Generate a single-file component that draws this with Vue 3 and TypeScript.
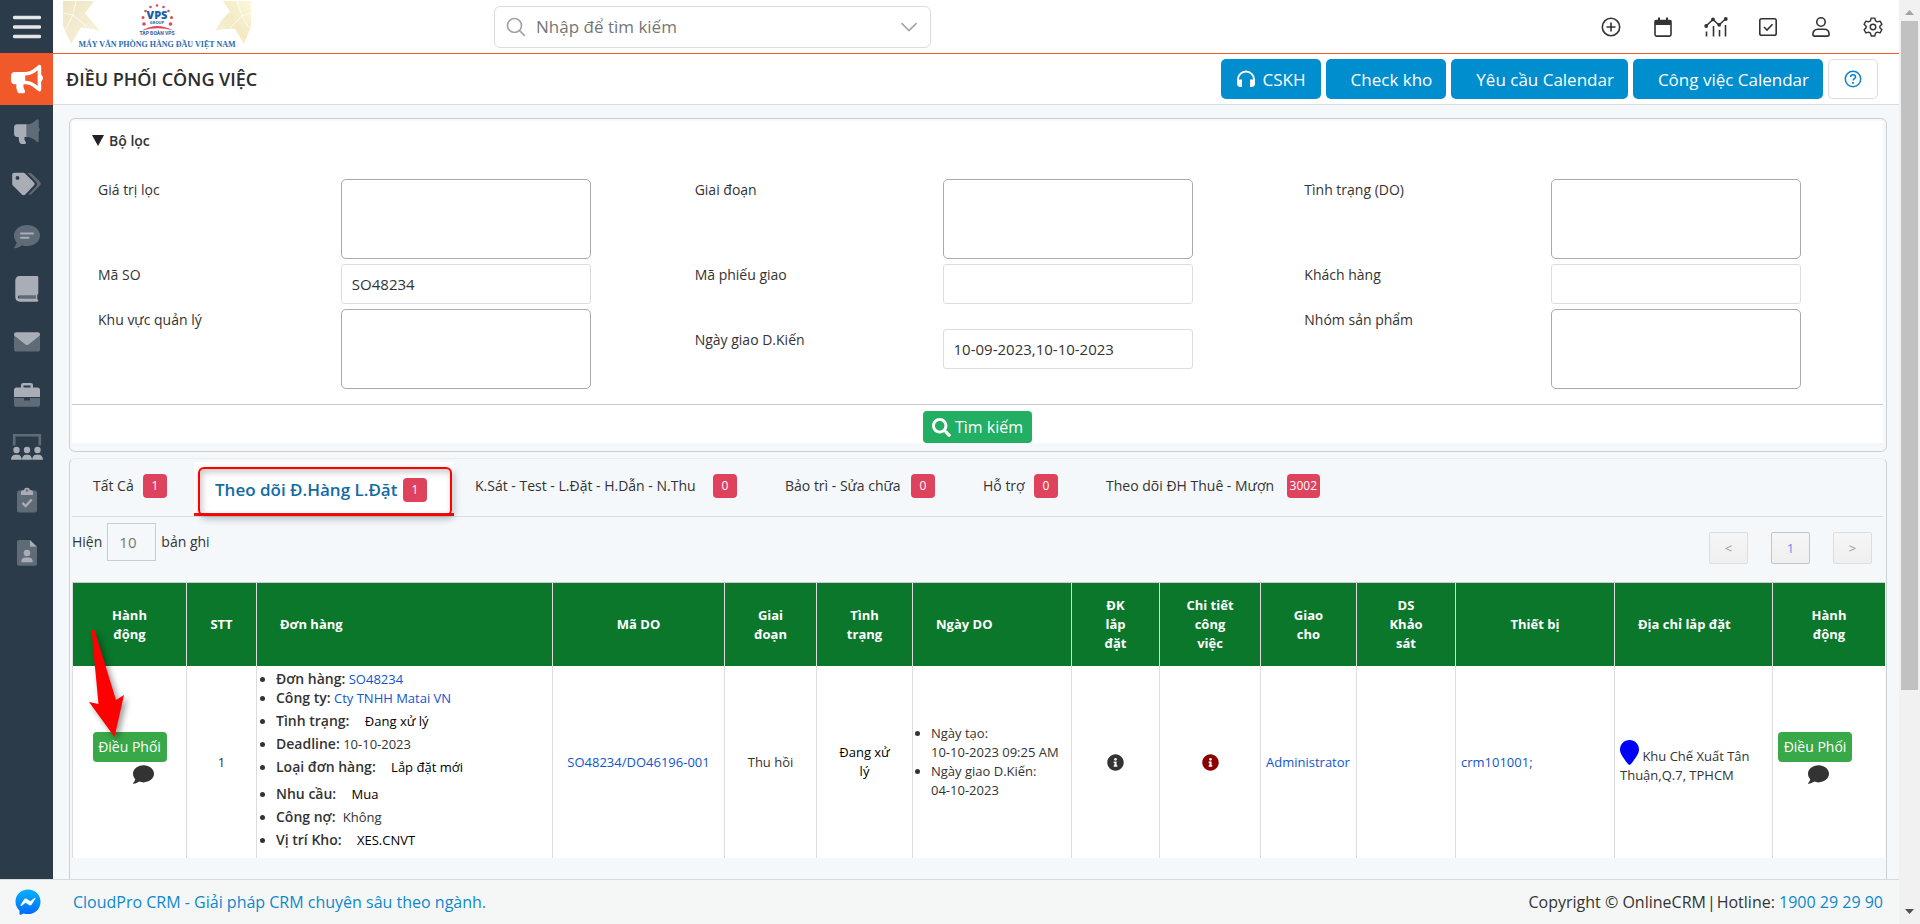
<script setup lang="ts">
import { ref } from 'vue'

interface Field {
  id: string
  label: string
  kind: 'box' | 'text'
  value?: string
  lowered?: boolean
}

interface Tab {
  label: string
  count: string
}

interface Detail {
  label: string
  value: string
  kind: 'link' | 'plain' | 'state' | 'near'
}

const fields = ref<Field[]>([
  { id: 'filter-value', label: 'Giá trị lọc', kind: 'box' },
  { id: 'stage', label: 'Giai đoạn', kind: 'box' },
  { id: 'do-status', label: 'Tình trạng (DO)', kind: 'box' },
  { id: 'so-code', label: 'Mã SO', kind: 'text', value: 'SO48234' },
  { id: 'delivery-code', label: 'Mã phiếu giao', kind: 'text', value: '' },
  { id: 'customer', label: 'Khách hàng', kind: 'text', value: '' },
  { id: 'region', label: 'Khu vực quản lý', kind: 'box' },
  { id: 'due-range', label: 'Ngày giao D.Kiến', kind: 'text', value: '10-09-2023,10-10-2023', lowered: true },
  { id: 'product-group', label: 'Nhóm sản phẩm', kind: 'box' },
])

const tabs: Tab[] = [
  { label: 'Tất Cả', count: '1' },
  { label: 'Theo dõi Đ.Hàng L.Đặt', count: '1' },
  { label: 'K.Sát - Test - L.Đặt - H.Dẫn - N.Thu', count: '0' },
  { label: 'Bảo trì - Sửa chữa', count: '0' },
  { label: 'Hỗ trợ', count: '0' },
  { label: 'Theo dõi ĐH Thuê - Mượn', count: '3002' },
]
const activeTab = ref(1)
const pageLength = ref('10')
const filterOpen = ref(true)

const columns: { lines: string[]; left?: boolean }[] = [
  { lines: ['Hành', 'động'] },
  { lines: ['STT'] },
  { lines: ['Đơn hàng'], left: true },
  { lines: ['Mã DO'] },
  { lines: ['Giai', 'đoạn'] },
  { lines: ['Tình', 'trạng'] },
  { lines: ['Ngày DO'], left: true },
  { lines: ['ĐK', 'lắp', 'đặt'] },
  { lines: ['Chi tiết', 'công', 'việc'] },
  { lines: ['Giao', 'cho'] },
  { lines: ['DS', 'Khảo', 'sát'] },
  { lines: ['Thiết bị'] },
  { lines: ['Địa chỉ lắp đặt'], left: true },
  { lines: ['Hành', 'động'] },
]

const details: Detail[] = [
  { label: 'Đơn hàng:', value: 'SO48234', kind: 'link' },
  { label: 'Công ty:', value: 'Cty TNHH Matai VN', kind: 'link' },
  { label: 'Tình trạng:', value: 'Đang xử lý', kind: 'state' },
  { label: 'Deadline:', value: '10-10-2023', kind: 'plain' },
  { label: 'Loại đơn hàng:', value: 'Lắp đặt mới', kind: 'state' },
  { label: 'Nhu cầu:', value: 'Mua', kind: 'state' },
  { label: 'Công nợ:', value: 'Không', kind: 'near' },
  { label: 'Vị trí Kho:', value: 'XES.CNVT', kind: 'state' },
]
</script>

<template>
  <div class="page">
    <div class="shell">
      <div class="upper">
        <aside class="sidebar">
          <button class="burger" type="button" aria-label="Menu">
            <svg width="28" height="24" viewBox="0 0 28 24"><path d="M1.5 2.5h25M1.5 12h25M1.5 21.5h25" stroke="#e3e6e9" stroke-width="3.4" stroke-linecap="round" /></svg>
          </button>
          <a class="side-active" href="#" aria-label="Marketing">
            <svg width="32" height="30" viewBox="0 0 576 512"><path fill="#fff" d="M576 240c0-23.63-12.95-44.04-32-55.12V32.01C544 23.26 537.02 0 512 0c-7.12 0-14.19 2.38-19.98 7.02l-85.03 68.03C364.28 109.19 310.66 128 256 128H64c-35.35 0-64 28.65-64 64v96c0 35.35 28.65 64 64 64h33.7c-1.39 10.48-2.18 21.14-2.18 32 0 39.77 9.26 77.35 25.56 110.94 5.19 10.69 16.52 17.06 28.4 17.06h74.28c26.05 0 41.69-29.84 25.9-50.56-16.4-21.52-26.15-48.36-26.15-77.44 0-11.11 1.62-21.79 4.41-32H256c54.66 0 108.28 18.81 150.98 52.95l85.03 68.03a32.023 32.023 0 0 0 19.98 7.02c24.92 0 32-22.78 32-32V295.13C563.05 284.04 576 263.63 576 240zm-96 141.42l-33.05-26.44C392.95 311.78 325.12 288 256 288v-96c69.12 0 136.95-23.78 190.95-66.98L480 98.58v282.84z" /></svg>
          </a>
          <nav class="side-list">
            <a href="#" aria-label="Chiến dịch">
              <svg width="26" height="26" viewBox="0 0 26 26">
                <path class="dim" d="M12.5 6.3c4.500 0 7.500-2 10-4.600 1-1 2.200-.6 2.200.7v6.900c1.400.9 1.400 3.500 0 4.400v9.200c0 1.300-1.200 1.700-2.200.7-2.500-2.600-5.500-4.700-10-4.700z" />
                <path class="lit" d="M12.500 6.300v12.600h-2c-.3 2 .2 3.600 1.300 5.100.6.900.1 1.900-1 1.900H7.400c-.8 0-1.300-.4-1.600-1.100-.9-2-1.200-3.900-1-5.900H3c-1.700 0-2.900-1.200-2.900-2.900V9.200c0-1.700 1.200-2.900 2.900-2.900z" />
              </svg>
            </a>
            <a href="#" aria-label="Thẻ">
              <svg width="29" height="24" viewBox="0 0 29 24">
                <path class="dim" d="M15.500 1h2.600c.7 0 1.200.2 1.700.7l8.300 8.400c.9.900.9 2.300 0 3.200l-8.500 8.700c-.9.900-2 1-3 .2l7.700-8c1.200-1.200 1.200-3.100 0-4.200z" />
                <path class="lit" d="M2.300.8h9c.7 0 1.300.2 1.800.7l8.700 8.700c1 1 1 2.400 0 3.400l-8.500 8.800c-.9 1-2.400 1-3.400 0L.9 13.500c-.5-.5-.7-1-.7-1.700V2.900C.2 1.700 1.100.8 2.300.8zM5.500 4a1.900 1.900 0 1 0 0 3.800A1.900 1.900 0 0 0 5.500 4z" fill-rule="evenodd" />
              </svg>
            </a>
            <a href="#" aria-label="Tin nhắn">
              <svg width="26" height="24" viewBox="0 0 26 24">
                <path class="dim" d="M13 0c7.200 0 13 4.700 13 10.600s-5.800 10.500-13 10.500c-1.900 0-3.700-.3-5.300-.9C6 21.800 3.600 23.200.5 23.200c-.5 0-.6-.5-.3-.8 1-1.200 2-2.800 2.500-4.900C1 15.600 0 13.200 0 10.600 0 4.700 5.800 0 13 0z" />
                <path d="M7 8.600h12M7 12.800h7.500" stroke="#a9aeb6" stroke-width="2" stroke-linecap="round" />
              </svg>
            </a>
            <a href="#" aria-label="Sổ">
              <svg width="24" height="26" viewBox="0 0 24 26">
                <path class="dim" d="M4 19h18v5H4z" />
                <path class="lit" d="M4.500 0H22c.8 0 1.300.5 1.300 1.300v16c0 .8-.4 1.200-1 1.400v4.700c.6.100 1 .5 1 1.100 0 .8-.5 1.200-1.300 1.200H4.900C2.200 25.700.3 23.800.3 21V4.400C.3 1.900 2 0 4.500 0zm.2 19.300c-2.300 0-2.300 3.500 0 3.500H21v-3.500z" fill-rule="evenodd" />
              </svg>
            </a>
            <a href="#" aria-label="Email">
              <svg width="26" height="20" viewBox="0 0 26 20">
                <path class="dim" d="M0 4l11.300 8.300c1 .8 2.400.8 3.400 0L26 4v13.200c0 1.400-.9 2.300-2.300 2.300H2.300C.9 19.500 0 18.600 0 17.200z" />
                <path class="lit" d="M2.300.3h21.400C25.100.3 26 1.200 26 2.500c0 .9-.4 1.500-1.100 2l-10.300 8c-1 .8-2.200.8-3.200 0L1.100 4.500C.4 4 0 3.400 0 2.500 0 1.200.9.300 2.300.3z" />
              </svg>
            </a>
            <a href="#" aria-label="Công việc">
              <svg width="26" height="24" viewBox="0 0 26 24">
                <path class="dim" d="M0 15h10v2.500h6V15h10v6.500c0 1.400-.9 2.300-2.300 2.300H2.300C.9 23.800 0 22.900 0 21.500z" />
                <path class="lit" d="M7 4.500V2.200C7 .9 7.900 0 9.200 0h7.600C18.100 0 19 .9 19 2.200v2.300h4.600C25 4.500 26 5.500 26 6.900V14H0V6.900C0 5.500 1 4.500 2.400 4.500zm2.500 0h7v-2h-7z" fill-rule="evenodd" />
              </svg>
            </a>
            <a href="#" aria-label="Nhóm">
              <svg width="32" height="26" viewBox="0 0 32 26">
                <path d="M3.200 11.500V1.300h25.600v10.200" fill="none" stroke="#606b78" stroke-width="2.600" />
                <g class="lit"><circle cx="5.500" cy="16" r="3.200" /><circle cx="16" cy="16" r="3.200" /><circle cx="26.500" cy="16" r="3.200" />
                  <path d="M0 25.800c0-3 1.700-5 4.200-5h2.600c2.400 0 4 2 4 5zM11 25.800c0-3 1.600-5 4-5h2c2.400 0 4 2 4 5zM21.200 25.800c0-3 1.600-5 4-5h2.600c2.500 0 4.200 2 4.200 5z" /></g>
              </svg>
            </a>
            <a href="#" aria-label="Nhiệm vụ">
              <svg width="20" height="26" viewBox="0 0 20 26">
                <rect class="dim" y="3.500" width="20" height="22" rx="2.200" />
                <path class="lit" d="M4 4.800C4 3.700 4.700 3.200 6 3.200h.8a3.300 3.300 0 0 1 6.400 0h.8c1.300 0 2 .5 2 1.600v3.200H4z" />
                <circle cx="10" cy="3.500" r="1.200" fill="#606b78" />
                <path d="M5.500 15.800l3.200 3.200 6-6.500" fill="none" stroke="#a9aeb6" stroke-width="2.400" />
              </svg>
            </a>
            <a href="#" aria-label="Hồ sơ">
              <svg width="20" height="26" viewBox="0 0 20 26">
                <path class="dim" d="M2 0h11v6.700h7V23.800c0 1.200-.9 2-2 2H2c-1.200 0-2-.8-2-2V2C0 .8.800 0 2 0z" />
                <path class="lit" d="M13 0l7 6.700h-7z" /><circle class="lit" cx="10" cy="13" r="3.300" />
                <path class="lit" d="M4.200 22.200c0-2.900 1.500-4.600 4-4.600h3.600c2.500 0 4 1.700 4 4.600z" />
              </svg>
            </a>
          </nav>
        </aside>

        <div class="content">
          <header class="topbar">
            <svg class="logo" width="188" height="48" viewBox="0 0 188 48" role="img" aria-label="VPS">
              <defs>
                <linearGradient id="gold" x1="0" y1="0" x2="1" y2="1"><stop offset="0" stop-color="#efe4c4" /><stop offset="1" stop-color="#f9f3df" /></linearGradient>
                <linearGradient id="gold-right" x1="1" y1="0" x2="0" y2="1"><stop offset="0" stop-color="#fdf8dc" /><stop offset=".5" stop-color="#f3e9c4" /><stop offset="1" stop-color="#fbf6e2" /></linearGradient>
              </defs>
              <path fill="url(#gold)" d="M0 0h31q-4 6-9 12l15 18q-9-3-19-3.500L8 43 0 25z" />
              <path fill="url(#gold-right)" d="M188 0h-28l7 11q-9 7-15 19 11-3 20-2l9 15 7-17z" />
              <path d="M0 12l10 2 3-14M10 14l14 12M10 14L2 30M188 12l-9 3-5-15M179 15l-12 12M179 15l7 12" stroke="#fff" stroke-width="1" fill="none" opacity=".7" />
              <g fill="#dc4a55">
                <circle cx="94" cy="4.500" r="1.300" /><circle cx="87.500" cy="6" r="1.300" /><circle cx="100.500" cy="6" r="1.300" />
                <circle cx="82.500" cy="10" r="1.300" /><circle cx="105.500" cy="10" r="1.300" /><circle cx="80" cy="16.500" r="1.500" /><circle cx="108.500" cy="16.500" r="1.500" />
                <circle cx="81" cy="23" r="1.800" /><circle cx="107.500" cy="23" r="1.800" />
                <path d="M79 29.500q15-9 31 0-15-4.500-31 0z" />
              </g>
              <text x="94" y="18" text-anchor="middle" class="logo-vps">VPS</text>
              <text x="94" y="23" text-anchor="middle" class="logo-group">GROUP</text>
              <text x="94" y="34" text-anchor="middle" class="logo-corp">TẬP ĐOÀN VPS</text>
              <text x="94" y="46" text-anchor="middle" class="logo-line">MÁY VĂN PHÒNG HÀNG ĐẦU VIỆT NAM</text>
            </svg>
            <label class="search">
              <svg width="20" height="20" viewBox="0 0 20 20" fill="none" stroke="#a5a5a5" stroke-width="1.700"><circle cx="8.500" cy="8.500" r="7" /><path d="M13.600 13.600l5.200 5.200" /></svg>
              <input type="text" placeholder="Nhập để tìm kiếm" aria-label="Nhập để tìm kiếm" />
              <svg width="18" height="10" viewBox="0 0 18 10" fill="none" stroke="#a5a5a5" stroke-width="1.700"><path d="M1.500 1.200L9 8.500l7.500-7.300" /></svg>
            </label>
            <div class="top-icons">
              <button type="button" aria-label="Thêm"><svg width="20" height="20" viewBox="0 0 20 20"><circle cx="10" cy="10" r="8.700" /><path d="M10 5.500v9M5.500 10h9" /></svg></button>
              <button type="button" aria-label="Lịch"><svg width="20" height="20" viewBox="0 0 20 20"><path d="M2 8v9.500c0 1 .6 1.600 1.600 1.600h12.800c1 0 1.600-.6 1.600-1.600V8" /><path d="M1.200 8V4.600c0-1.200.8-1.900 2-1.900H5V.5h2v2.200h6V.5h2v2.200h1.800c1.200 0 2 .7 2 1.900V8z" fill="#333" stroke="none" /></svg></button>
              <button type="button" aria-label="Báo cáo"><svg width="24" height="20" viewBox="0 0 24 20"><path d="M2 9l7-6.500 6 5.500 7-6.500M2.500 14.500v5M9.500 9v10.500M15.500 13v6.500M21.500 8v11.500" /><g fill="#333" stroke="none"><circle cx="2.200" cy="9" r="1.900" /><circle cx="9" cy="2.400" r="1.900" /><circle cx="15.200" cy="7.800" r="1.900" /><circle cx="21.800" cy="2" r="1.900" /></g></svg></button>
              <button type="button" aria-label="Việc"><svg width="20" height="20" viewBox="0 0 20 20"><rect x="1.800" y="1.800" width="16.400" height="16.400" rx="1.800" /><path d="M6 10l3 3 5.500-5.800" /></svg></button>
              <button type="button" aria-label="Tài khoản"><svg width="20" height="20" viewBox="0 0 20 20"><circle cx="10" cy="5" r="4.200" /><path d="M1.900 17.300c0-3.200 2-5 5-5h6.200c3 0 5 1.800 5 5 0 1.200-.6 1.800-1.700 1.800H3.600c-1.100 0-1.700-.6-1.700-1.800z" /></svg></button>
              <button type="button" aria-label="Cài đặt"><svg width="22" height="22" viewBox="0 0 24 24"><circle cx="12" cy="12" r="3" /><path d="M10 2.300h4l.8 3 2 1.100 2.900-.8 2 3.400-2.200 2.100v1.800l2.200 2.100-2 3.400-2.900-.8-2 1.100-.8 3h-4l-.8-3-2-1.100-2.900.8-2-3.400 2.200-2.100v-1.800L2.300 9l2-3.400 2.900.8 2-1.100z" stroke-linejoin="round" /></svg></button>
            </div>
          </header>

          <div class="titlebar">
            <h1>ĐIỀU PHỐI CÔNG VIỆC</h1>
            <div class="actions">
              <button class="blue" type="button">
                <svg width="20" height="18" viewBox="0 0 20 18"><path d="M2 14V9.500a8 8 0 0 1 16 0V14" fill="none" stroke="#fff" stroke-width="2" /><path d="M1 12.500C1 10.500 2.200 9.500 4 9.500h2v7.500H4.500C2.200 17 1 15.500 1 14zM19 12.500c0-2-1.200-3-3-3h-2v7.500h1.500c2.300 0 3.500-1.500 3.500-3z" fill="#fff" /></svg>
                CSKH
              </button>
              <button class="blue wide" type="button">Check kho</button>
              <button class="blue wide" type="button">Yêu cầu Calendar</button>
              <button class="blue wide" type="button">Công việc Calendar</button>
              <button class="help" type="button" aria-label="Trợ giúp">
                <svg width="18" height="18" viewBox="0 0 18 18" fill="none" stroke="#0b84c6" stroke-width="1.500"><circle cx="9" cy="9" r="7.700" /><path d="M6.500 7c.2-1.500 1.200-2.200 2.500-2.200 1.500 0 2.500.8 2.500 2.100 0 1.700-2.400 1.700-2.400 3.500" /><path d="M9 12v1.800" stroke-width="1.800" /></svg>
              </button>
            </div>
          </div>

          <main class="main">
            <section class="panel filter">
              <div class="filter-inner">
                <button class="filter-head" type="button" :aria-expanded="filterOpen" @click="filterOpen = !filterOpen">
                  <svg width="12" height="11" viewBox="0 0 12 11"><path d="M0 0h12L6 11z" fill="#222" /></svg>
                  Bộ lọc
                </button>
                <form v-show="filterOpen" class="fields" @submit.prevent>
                  <template v-for="f in fields" :key="f.id">
                    <label :for="f.id" :class="{ lowered: f.lowered }">{{ f.label }}</label>
                    <select v-if="f.kind === 'box'" :id="f.id" class="box" multiple></select>
                    <input v-else :id="f.id" v-model="f.value" type="text" :class="{ lowered: f.lowered }" />
                  </template>
                </form>
                <div class="submit-row">
                  <button class="find" type="button">
                    <svg width="19" height="19" viewBox="0 0 512 512"><path fill="#fff" d="M505 442.700L405.300 343c-4.500-4.500-10.600-7-17-7H372c27.600-35.300 44-79.700 44-128C416 93.100 322.900 0 208 0S0 93.100 0 208s93.100 208 208 208c48.300 0 92.700-16.400 128-44v16.300c0 6.400 2.500 12.500 7 17l99.700 99.700c9.400 9.400 24.600 9.400 33.900 0l28.300-28.300c9.400-9.400 9.400-24.600.1-34zM208 336c-70.700 0-128-57.200-128-128 0-70.700 57.200-128 128-128 70.700 0 128 57.200 128 128 0 70.700-57.200 128-128 128z" /></svg>
                    Tìm kiếm
                  </button>
                </div>
              </div>
            </section>

            <section class="panel results">
              <div class="tabs" role="tablist">
                <button v-for="(t, i) in tabs" :key="t.label" type="button" role="tab" class="tab" :class="{ active: i === activeTab }" :aria-selected="i === activeTab" @click="activeTab = i">
                  <span>{{ t.label }}</span>
                  <span class="badge">{{ t.count }}</span>
                </button>
              </div>

              <div class="tools">
                <label class="length">Hiện <input v-model="pageLength" type="text" /> bản ghi</label>
                <div class="pager">
                  <button type="button" disabled>&lt;</button>
                  <button type="button" class="current">1</button>
                  <button type="button" disabled>&gt;</button>
                </div>
              </div>

              <div class="table-wrap">
                <table>
                  <colgroup>
                    <col v-for="(c, i) in columns" :key="i" :class="'c' + i" />
                  </colgroup>
                  <thead>
                    <tr>
                      <th v-for="(c, i) in columns" :key="i" :class="{ left: c.left }">
                        <div v-for="l in c.lines" :key="l">{{ l }}</div>
                      </th>
                    </tr>
                  </thead>
                  <tbody>
                    <tr>
                      <td>
                        <div class="act first">
                          <button type="button">Điều Phối</button>
                          <svg width="21" height="21" viewBox="0 0 512 512"><path fill="#333" d="M256 32C114.600 32 0 125.100 0 240c0 49.600 21.400 95 57 130.700C44.500 421.100 2.700 466 2.200 466.500c-2.200 2.300-2.800 5.700-1.500 8.700S4.800 480 8 480c66.300 0 116-31.800 140.600-51.400 32.700 12.300 69 19.400 107.400 19.400 141.400 0 256-93.100 256-208S397.400 32 256 32z" /></svg>
                        </div>
                      </td>
                      <td>1</td>
                      <td class="left">
                        <ul class="details">
                          <li v-for="d in details" :key="d.label" :class="d.kind">
                            <b>{{ d.label }}</b>{{ ' ' }}<a v-if="d.kind === 'link'" href="#">{{ d.value }}</a><span v-else>{{ d.value }}</span>
                          </li>
                        </ul>
                      </td>
                      <td><a href="#">SO48234/DO46196-001</a></td>
                      <td>Thu hồi</td>
                      <td class="status">Đang xử lý</td>
                      <td class="left">
                        <ul class="dates">
                          <li>Ngày tạo:<br />10-10-2023 09:25 AM</li>
                          <li>Ngày giao D.Kiến:<br />04-10-2023</li>
                        </ul>
                      </td>
                      <td class="info"><svg width="17" height="17" viewBox="0 0 512 512"><path d="M256 8C119.043 8 8 119.083 8 256c0 136.997 111.043 248 248 248s248-111.003 248-248C504 119.083 392.957 8 256 8zm0 110c23.196 0 42 18.804 42 42s-18.804 42-42 42-42-18.804-42-42 18.804-42 42-42zm56 254c0 6.627-5.373 12-12 12h-88c-6.627 0-12-5.373-12-12v-24c0-6.627 5.373-12 12-12h12v-64h-12c-6.627 0-12-5.373-12-12v-24c0-6.627 5.373-12 12-12h64c6.627 0 12 5.373 12 12v100h12c6.627 0 12 5.373 12 12v24z" /></svg></td>
                      <td class="info red"><svg width="17" height="17" viewBox="0 0 512 512"><path d="M256 8C119.043 8 8 119.083 8 256c0 136.997 111.043 248 248 248s248-111.003 248-248C504 119.083 392.957 8 256 8zm0 110c23.196 0 42 18.804 42 42s-18.804 42-42 42-42-18.804-42-42 18.804-42 42-42zm56 254c0 6.627-5.373 12-12 12h-88c-6.627 0-12-5.373-12-12v-24c0-6.627 5.373-12 12-12h12v-64h-12c-6.627 0-12-5.373-12-12v-24c0-6.627 5.373-12 12-12h64c6.627 0 12 5.373 12 12v100h12c6.627 0 12 5.373 12 12v24z" /></svg></td>
                      <td class="left pad"><a href="#">Administrator</a></td>
                      <td></td>
                      <td class="left pad"><a href="#">crm101001;</a></td>
                      <td class="left pad">
                        <svg width="19" height="25" viewBox="0 0 19 25"><path fill="#00f" d="M9.500 0C4.200 0 0 4.200 0 9.400c0 3.800 1.800 6.100 8 14.700.7 1.100 2.300 1.100 3 0 6.200-8.600 8-10.900 8-14.700C19 4.200 14.800 0 9.500 0z" /></svg>
                        Khu Chế Xuất Tân Thuận,Q.7, TPHCM
                      </td>
                      <td class="left pad">
                        <div class="act">
                          <button type="button">Điều Phối</button>
                          <svg width="21" height="21" viewBox="0 0 512 512"><path fill="#333" d="M256 32C114.600 32 0 125.100 0 240c0 49.600 21.400 95 57 130.700C44.500 421.100 2.700 466 2.200 466.500c-2.200 2.300-2.800 5.700-1.500 8.700S4.800 480 8 480c66.300 0 116-31.800 140.600-51.400 32.700 12.300 69 19.400 107.400 19.400 141.400 0 256-93.100 256-208S397.400 32 256 32z" /></svg>
                        </div>
                      </td>
                    </tr>
                  </tbody>
                </table>
                <svg class="arrow" width="48" height="120" viewBox="0 0 48 120" aria-hidden="true"><path fill="#f00" d="M6.500 4h3L31 74l8-5-9.500 42L4 76l9.500 2z" /></svg>
              </div>
            </section>
          </main>
        </div>
      </div>

      <footer class="footer">
        <svg width="26" height="26" viewBox="0 0 26 26" role="img" aria-label="Messenger">
          <defs><linearGradient id="msg" x1="0" y1="0" x2="0" y2="1"><stop offset="0" stop-color="#00b2ff" /><stop offset="1" stop-color="#006aff" /></linearGradient></defs>
          <path fill="url(#msg)" d="M13 .4C5.900.4.500 5.600.500 12.600c0 3.700 1.500 6.800 4 9v3.200c0 .8.700 1.200 1.400.9l2.700-1.200c1.400.4 2.900.6 4.400.6 7.100 0 12.500-5.200 12.500-12.400S20.100.4 13 .4z" />
          <path fill="#fff" d="M5.500 16.100l3.700-5.800c.6-.9 1.800-1.100 2.700-.5l2.900 2.200c.3.200.6.200.8 0l3.900-3c.5-.4 1.200.2.9.8l-3.700 5.800c-.6.900-1.800 1.100-2.700.5l-2.900-2.200c-.3-.2-.6-.2-.8 0l-3.900 3c-.5.400-1.200-.2-.9-.8z" />
        </svg>
        <a href="#">CloudPro CRM - Giải pháp CRM chuyên sâu theo ngành.</a>
        <p>Copyright © OnlineCRM<span class="bar">|</span>Hotline: <a href="#">1900 29 29 90</a></p>
      </footer>
    </div>

    <div class="scrollbar" aria-hidden="true">
      <svg width="9" height="5" viewBox="0 0 9 5"><path d="M4.500 0L9 5H0z" fill="#a3a3a3" /></svg>
      <div class="thumb"></div>
      <svg class="down" width="9" height="5" viewBox="0 0 9 5"><path d="M0 0h9L4.500 5z" fill="#505050" /></svg>
    </div>
  </div>
</template>

<style>
body { margin: 0; }
</style>

<style scoped>
* { box-sizing: border-box; }
.page { display: grid; grid-template-columns: minmax(0, 1fr) 21px; min-height: 100vh; font-family: "Open Sans", "Noto Sans", sans-serif; font-size: 14px; line-height: 20px; color: #333; background: #f4f8fb; }
button, input, select { font-family: inherit; margin: 0; }
button { cursor: pointer; padding: 0; border: 0; background: none; color: inherit; }
a { color: #1155cc; text-decoration: none; }
svg { display: block; flex: none; }
.shell { display: flex; flex-direction: column; min-width: 0; }
.upper { flex: 1; display: flex; }
.content { flex: 1; min-width: 0; display: flex; flex-direction: column; }

.sidebar { width: 53px; flex: none; background: #2c3b49; }
.burger, .side-active { display: flex; align-items: center; justify-content: center; width: 100%; }
.burger { height: 53px; }
.side-active { height: 52px; background: #f1592a; }
.side-list { display: grid; grid-template-rows: repeat(9, 1fr); height: 474px; }
.side-list a { display: flex; align-items: center; justify-content: center; }
.lit { fill: #a9aeb6; }
.dim { fill: #606b78; }

.topbar { display: flex; align-items: center; height: 54px; padding: 0 14px 0 10px; background: #fff; border-bottom: 1px solid #f1592a; }
.logo { align-self: flex-start; margin-top: 1px; }
.logo-vps { font: 800 11px "Open Sans", sans-serif; fill: #1d62a8; }
.logo-group { font: 700 4px "Open Sans", sans-serif; fill: #1d62a8; }
.logo-corp { font: 700 5px Roboto, sans-serif; fill: #1d62a8; }
.logo-line { font: 700 8px "Liberation Serif", serif; fill: #2a6cb0; }
.search { display: flex; align-items: center; width: 437px; height: 42px; margin: 0 auto 0 243px; padding: 0 12px 0 11px; border: 1px solid #ddd; border-radius: 6px; }
.search input { flex: 1; min-width: 0; padding: 0 10px; border: 0; outline: 0; background: none; font-size: 17px; }
.search input::placeholder { color: #757575; opacity: 1; }
.top-icons { display: flex; justify-content: space-between; width: 286px; }
.top-icons button { display: flex; align-items: center; justify-content: center; width: 24px; height: 24px; }
.top-icons svg { fill: none; stroke: #333; stroke-width: 1.600; }

.titlebar { display: flex; align-items: center; justify-content: space-between; height: 51px; padding: 0 21px 0 13px; background: #fff; border-bottom: 1px solid #ddd; }
h1 { margin: 0; font-size: 18px; line-height: 24px; font-weight: 600; color: #2c2c2c; }
.actions { display: flex; gap: 5px; }
.blue, .help { display: flex; align-items: center; justify-content: center; gap: 7px; height: 40px; border-radius: 5px; }
.blue { padding: 0 15px; background: #008ecf; color: #fff; font-size: 17px; }
.blue.wide { padding: 0 14px 0 25px; }
.help { width: 50px; border: 1px solid #ddd; background: #fff; }

.main { flex: 1; display: flex; flex-direction: column; gap: 6px; padding: 13px 12px 0 16px; }
.panel { border: 1px solid #ccd0d3; border-radius: 6px; }
.filter { padding: 2px 3px 8px 2px; }
.filter-inner { background: #fff; }
.filter-head { display: flex; align-items: center; gap: 5px; height: 38px; margin-left: 20px; font-size: 14px; font-weight: 600; }
.fields { display: grid; grid-template-columns: 243fr 354fr 248fr 362fr 247fr 332fr; grid-template-rows: 80px 40px 80px; row-gap: 5px; padding: 20px 0 15px 26px; border-bottom: 1px solid #ccc; align-items: start; }
.fields label { line-height: 22px; }
.fields .box, .fields input { display: block; width: 250px; max-width: 90%; padding: 0 10px; background: #fff; color: #333; outline: 0; }
.fields .box { height: 80px; border: 1px solid #aaa; border-radius: 5px; }
.fields input { height: 40px; border: 1px solid #ddd; border-radius: 3px; font-size: 15px; }
.lowered { margin-top: 20px; }
.submit-row { display: flex; justify-content: center; padding-top: 6px; }
.find { display: flex; align-items: center; gap: 4px; height: 32px; padding: 0 9px; border-radius: 4px; background: #22ae63; color: #fff; font-size: 16px; }

.results { flex: 1; border-top-color: #e9edf0; border-bottom: 0; border-radius: 6px 6px 0 0; padding: 3px 3px 21px 2px; }
.tabs { display: grid; grid-template-columns: 122px 260px 310px 198px 123px 262px; height: 55px; border-bottom: 1px solid #dcdfe1; }
.tab { position: relative; display: flex; align-items: flex-start; justify-content: space-between; padding: 12px 27px 0 21px; font-size: 14px; line-height: 24px; white-space: nowrap; }
.tab.active { padding-top: 16px; background: #fff; border-bottom: 3px solid #f01616; color: #126ba3; font-size: 17px; font-weight: 600; }
.tab.active::after { content: ""; position: absolute; inset: 5px 2px -3px 4px; border: 2px solid #f00; border-radius: 6px; box-shadow: 2px 3px 7px rgba(0, 0, 0, .25), inset 2px 3px 7px rgba(0, 0, 0, .22); }
.badge { min-width: 24px; padding: 0 3px; border-radius: 4px; background: #df425c; color: #fff; font-size: 12px; line-height: 24px; font-weight: 400; text-align: center; }
.tools { display: flex; justify-content: space-between; height: 65px; padding: 6px 11px 0 0; }
.length { display: flex; align-items: center; gap: 5px; height: 38px; font-size: 14px; }
.length input { width: 49px; height: 38px; padding: 0 11px; border: 1px solid #ccc; background: transparent; color: #777; font-size: 15px; outline: 0; }
.pager { display: flex; gap: 23px; padding-top: 9px; }
.pager button { width: 39px; height: 32px; border: 1px solid #ddd; border-radius: 2px; background: linear-gradient(#f6f6f6, #efefef); color: #999; font-size: 13px; }
.pager .current { border-color: #c4c4c4; color: #7184f5; }

.table-wrap { position: relative; }
table { width: 100%; table-layout: fixed; border-collapse: separate; border-spacing: 0; border-top: 1px solid #ccc; border-left: 1px solid #ddd; font-size: 13px; line-height: 19px; }
.c0 { width: 114px; } .c1 { width: 70px; } .c2 { width: 296px; } .c3 { width: 172px; } .c4 { width: 92px; } .c5 { width: 96px; } .c6 { width: 159px; }
.c7 { width: 88px; } .c8 { width: 101px; } .c9 { width: 96px; } .c10 { width: 99px; } .c11 { width: 159px; } .c12 { width: 158px; } .c13 { width: 112px; }
th, td { padding: 0; border-right: 1px solid #ddd; text-align: center; vertical-align: middle; }
th:last-child, td:last-child { border-right: 0; }
th { height: 83px; background: #0a772b; color: #fff; font-weight: 700; }
th.left { text-align: left; padding-left: 23px; }
td { height: 192px; background: #fff; }
td.left { text-align: left; }
td.pad { padding: 0 5px; }
td.status { padding: 0 20px; color: #000; }
ul { margin: 0; padding-left: 19px; list-style: disc; }
.details b { font-size: 14px; line-height: 1; font-weight: 600; }
.details .state { line-height: 27px; }
.details .state span { padding-left: 12px; color: #000; }
.details .near span { padding-left: 4px; }
.dates { padding-left: 18px; white-space: nowrap; }
.info svg { display: block; margin: 0 auto; fill: #333; }
.info.red svg { fill: #8b0000; }
td.pad > svg { display: inline-block; vertical-align: baseline; margin-bottom: -4px; }
.act { width: 74px; padding-bottom: 8px; }
.act.first { margin: 0 auto; }
.act button { display: block; width: 74px; height: 30px; border-radius: 4px; background: #38a849; color: #fff; font-size: 14px; }
.act svg { margin: 2px 0 0 30px; }
.act.first svg { margin-left: 40px; }
.arrow { position: absolute; left: 13px; top: 44px; filter: drop-shadow(3px 3px 3px rgba(0, 0, 0, .4)); pointer-events: none; }

.footer { display: flex; align-items: center; height: 45px; padding: 0 16px 0 15px; border-top: 1px solid #d9dcdf; background: #f5f7f6; font-size: 16px; }
.footer > a { margin-left: 32px; }
.footer a { color: #0e88cb; }
.footer p { margin: 0 0 0 auto; }
.bar { margin: 0 1px; }

.scrollbar { display: flex; flex-direction: column; align-items: center; padding: 10px 0; background: #f1f1f1; }
.thumb { width: 17px; flex: 0 0 74%; margin-top: 6px; background: #c1c1c1; }
.scrollbar .down { margin-top: auto; }
</style>
